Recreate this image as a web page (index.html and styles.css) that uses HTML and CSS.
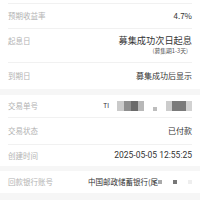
FILE: index.html
```html
<!DOCTYPE html>
<html>
<head>
<meta charset="utf-8">
<link rel="stylesheet" href="styles.css">
</head>
<body>
<div class="page">
  <div class="line"></div>
  <div class="row r1">
    <span class="label">预期收益率</span>
    <span class="value">4.7%</span>
  </div>
  <div class="line"></div>
  <div class="row r2">
    <span class="label">起息日</span>
    <div class="stack">
      <span class="value big">募集成功次日起息</span>
      <span class="sub">(募集期1-3天)</span>
    </div>
  </div>
  <div class="line"></div>
  <div class="row r3">
    <span class="label">到期日</span>
    <span class="value">募集成功后显示</span>
  </div>
  <div class="band b1"></div>
  <div class="row r4">
    <span class="label">交易单号</span>
    <div class="masked">
      <span class="value ti">TI</span>
      <div class="mosaic">
        <i class="m m1"></i><i class="m m2"></i><i class="m m3"></i><i class="m m4"></i>
        <i class="gapa"></i>
        <i class="m m5"></i>
        <i class="gapb"></i>
        <i class="m m6"></i><i class="m m7"></i><i class="m m8"></i>
      </div>
    </div>
  </div>
  <div class="line"></div>
  <div class="row r5">
    <span class="label">交易状态</span>
    <span class="value">已付款</span>
  </div>
  <div class="line"></div>
  <div class="row r6">
    <span class="label">创建时间</span>
    <span class="value num">2025-05-05 12:55:25</span>
  </div>
  <div class="band b2"></div>
  <div class="row r7">
    <span class="label">回款银行账号</span>
    <div class="masked">
      <span class="value bank">中国邮政储蓄银行(尾</span>
      <div class="dots">
        <i class="d d1"></i><i class="d d2"></i><i class="d d3"></i>
      </div>
    </div>
  </div>
  <div class="band b3"></div>
</div>
</body>
</html>
```
FILE: styles.css
```css
html, body {
  margin: 0;
  padding: 0;
  background: #ffffff;
}
.page {
  width: 200px;
  height: 200px;
  overflow: hidden;
  display: flex;
  flex-direction: column;
  font-family: "Noto Sans CJK SC", "Noto Sans", sans-serif;
}
.line {
  height: 1px;
  margin: 0 8px;
  background: #f1f1f1;
  flex: none;
}
.page > .line:first-child {
  margin-top: 3px;
}
.band {
  background: #f6f6f6;
  flex: none;
}
.b1 { height: 6px; }
.b2 { height: 5px; }
.b3 { height: 10px; }
.row {
  display: flex;
  justify-content: space-between;
  align-items: center;
  padding: 0 8px;
  flex: none;
}
.r1 { height: 24px; }
.r2 { height: 33px; align-items: flex-start; }
.r3 { height: 26px; }
.r4 { height: 22px; }
.r5 { height: 26px; }
.r6 { height: 21px; }
.r7 { height: 22px; }
.label {
  font-size: 7.5px;
  color: #b3b3b3;
  line-height: 1;
}
.r2 .label { margin-top: 8px; }
.value {
  font-size: 8px;
  color: #333333;
  line-height: 1;
}
.num {
  font-family: Roboto, "Noto Sans", sans-serif;
  font-size: 8.5px;
}
.stack {
  display: flex;
  flex-direction: column;
  align-items: flex-end;
  margin-top: 7px;
}
.big {
  font-size: 9.2px;
}
.sub {
  font-size: 5.8px;
  color: #555555;
  line-height: 1;
  margin-top: 3px;
  margin-right: 4px;
}
.masked {
  display: flex;
  align-items: center;
}
.ti {
  font-family: Roboto, "Noto Sans", sans-serif;
  font-size: 6.5px;
}
.mosaic {
  display: flex;
  align-items: center;
  margin-left: 8px;
}
.m {
  display: block;
  height: 10px;
}
.m1 { width: 7px; background: #cacaca; }
.m2 { width: 7px; background: #8e8e8e; }
.m3 { width: 7px; background: #6a6a6a; }
.m4 { width: 6px; background: #b8b8b8; }
.gapa { display: block; width: 9px; }
.m5 { width: 4px; height: 4px; background: #bdbdbd; margin-top: 6px; }
.gapb { display: block; width: 9px; }
.m6 { width: 6px; background: #cccccc; }
.m7 { width: 14px; background: #7a7a7a; }
.m8 { width: 6px; background: #d2d2d2; }
.bank {
  font-size: 7.5px;
}
.dots {
  display: flex;
  align-items: center;
}
.d {
  display: block;
  width: 4px;
  height: 4px;
}
.d1 { background: #aaaaaa; margin-left: 0; }
.d2 { background: #777777; margin-left: 11px; }
.d3 { background: #eeeeee; margin-left: 11px; }
```
